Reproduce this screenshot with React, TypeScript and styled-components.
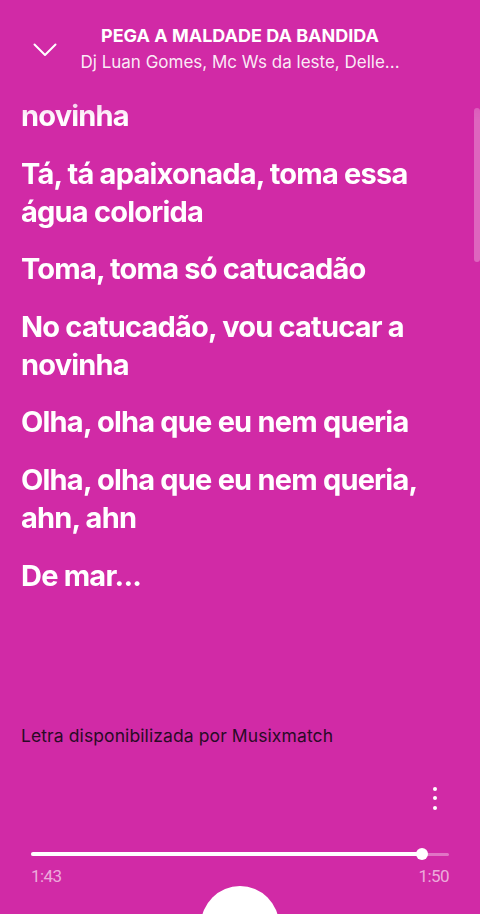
import React from "react";
import styled, { createGlobalStyle } from "styled-components";

const BG = "#d12aa6";

const GlobalStyle = createGlobalStyle`
  html, body { margin: 0; padding: 0; background: ${BG}; }
  * { box-sizing: border-box; }
`;

const Page = styled.div`
  width: 480px;
  height: 914px;
  overflow: hidden;
  background: ${BG};
  display: flex;
  flex-direction: column;
  font-family: "Inter", "Noto Sans", sans-serif;
  color: #fff;
  & > * { flex-shrink: 0; }
`;

const Header = styled.header`
  height: 97px;
  padding-top: 26px;
  display: grid;
  grid-template-columns: 64px 1fr 64px;
  align-items: start;
`;

const BackButton = styled.button`
  margin: 17px 0 0 33px;
  padding: 0;
  width: 24px;
  height: 14px;
  border: none;
  background: none;
  display: flex;
`;

const TitleBlock = styled.div`
  display: flex;
  flex-direction: column;
  align-items: center;
  text-align: center;
  min-width: 0;
`;

const Title = styled.div`
  font-size: 18px;
  font-weight: 700;
  line-height: 20px;
  white-space: nowrap;
`;

const Subtitle = styled.div`
  margin-top: 5px;
  font-size: 17px;
  font-weight: 400;
  line-height: 22px;
  white-space: nowrap;
  color: rgba(255, 255, 255, 0.92);
`;

const LyricsViewport = styled.div`
  position: relative;
  height: 603px;
  overflow: hidden;
  -webkit-mask-image: linear-gradient(to bottom, rgba(0,0,0,0.7) 0, #000 22px);
  mask-image: linear-gradient(to bottom, rgba(0,0,0,0.7) 0, #000 22px);
`;

const LyricsList = styled.div`
  display: flex;
  flex-direction: column;
  gap: 19.6px;
  padding: 0 36px 0 21px;
`;

const Line = styled.p`
  margin: 0;
  font-size: 29px;
  font-weight: 700;
  line-height: 38px;
  letter-spacing: -0.8px;
  color: #fff;
`;

const ScrollThumb = styled.div`
  position: absolute;
  right: 0;
  top: 11px;
  width: 6px;
  height: 154px;
  border-radius: 3px;
  background: rgba(255, 255, 255, 0.28);
`;

const Credit = styled.div`
  margin-top: 25px;
  padding-left: 21px;
  font-size: 17.5px;
  line-height: 22px;
  letter-spacing: 0.1px;
  color: #2a0a26;
`;

const Footer = styled.footer`
  display: flex;
  flex-direction: column;
`;

const MoreRow = styled.div`
  margin-top: 39px;
  display: flex;
  justify-content: flex-end;
  padding-right: 33px;
`;

const MoreButton = styled.button`
  width: 24px;
  height: 24px;
  padding: 0;
  border: none;
  background: none;
  display: flex;
  flex-direction: column;
  align-items: center;
  justify-content: center;
  gap: 5.5px;
`;

const Dot = styled.span`
  width: 4px;
  height: 4px;
  border-radius: 50%;
  background: #fff;
`;

const ProgressWrap = styled.div`
  margin-top: 38px;
  padding: 0 31px;
`;

const Track = styled.div`
  position: relative;
  height: 12px;
  display: flex;
  align-items: center;
  &::before {
    content: "";
    position: absolute;
    left: 0;
    right: 0;
    top: 4.5px;
    height: 3px;
    border-radius: 2px;
    background: rgba(255, 255, 255, 0.35);
  }
`;

const Fill = styled.div`
  position: relative;
  height: 4px;
  border-radius: 2px;
  background: #fff;
`;

const Thumb = styled.span`
  position: absolute;
  right: -6px;
  top: -4px;
  width: 12px;
  height: 12px;
  border-radius: 50%;
  background: #fff;
`;

const Times = styled.div`
  margin-top: 7px;
  display: flex;
  justify-content: space-between;
  font-family: "Roboto", "Liberation Sans", sans-serif;
  font-size: 17px;
  line-height: 19px;
  letter-spacing: -0.6px;
  color: rgba(255, 255, 255, 0.62);
`;

const PlayRow = styled.div`
  margin-top: 0;
  display: flex;
  justify-content: center;
`;

const PlayButton = styled.button`
  width: 78px;
  height: 78px;
  flex-shrink: 0;
  border: none;
  border-radius: 50%;
  background: #fff;
  padding: 0;
`;

const lines = [
  "novinha",
  "Tá, tá apaixonada, toma essa água colorida",
  "Toma, toma só catucadão",
  "No catucadão, vou catucar a novinha",
  "Olha, olha que eu nem queria",
  "Olha, olha que eu nem queria, ahn, ahn",
  "De mar...",
];

const elapsed = 103;
const total = 110;

export default function App() {
  const pct = (elapsed / total) * 100;
  return (
    <>
      <GlobalStyle />
      <Page>
        <Header>
          <BackButton aria-label="Fechar">
            <svg width="24" height="14" viewBox="0 0 24 14" fill="none">
              <polyline
                points="1.5,1.5 12,12 22.5,1.5"
                stroke="#fff"
                strokeWidth="2"
                strokeLinecap="round"
                strokeLinejoin="round"
              />
            </svg>
          </BackButton>
          <TitleBlock>
            <Title>PEGA A MALDADE DA BANDIDA</Title>
            <Subtitle>Dj Luan Gomes, Mc Ws da leste, Delle...</Subtitle>
          </TitleBlock>
          <div />
        </Header>
        <LyricsViewport>
          <LyricsList>
            {lines.map((l, i) => (
              <Line key={i}>{l}</Line>
            ))}
          </LyricsList>
          <ScrollThumb />
        </LyricsViewport>
        <Credit>Letra disponibilizada por Musixmatch</Credit>
        <Footer>
          <MoreRow>
            <MoreButton aria-label="Mais opções">
              <Dot />
              <Dot />
              <Dot />
            </MoreButton>
          </MoreRow>
          <ProgressWrap>
            <Track>
              <Fill style={{ width: `${pct}%` }}>
                <Thumb />
              </Fill>
            </Track>
            <Times>
              <span>1:43</span>
              <span>1:50</span>
            </Times>
          </ProgressWrap>
          <PlayRow>
            <PlayButton aria-label="Pausar" />
          </PlayRow>
        </Footer>
      </Page>
    </>
  );
}
